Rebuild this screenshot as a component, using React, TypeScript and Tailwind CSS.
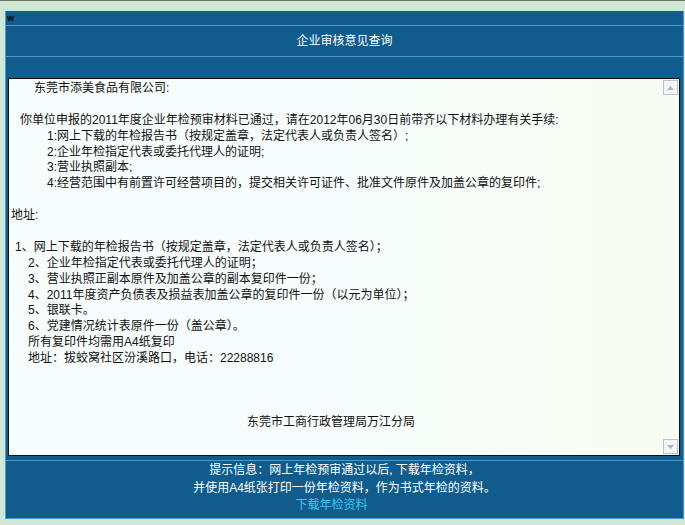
const font = { fontFamily: '"Liberation Sans", "Noto Sans CJK SC", sans-serif' };

type Line = { text: string; pad: number };

const lines: Line[] = [
  { text: '东莞市添美食品有限公司:', pad: 24 },
  { text: '', pad: 0 },
  { text: '你单位申报的2011年度企业年检预审材料已通过，请在2012年06月30日前带齐以下材料办理有关手续:', pad: 10 },
  { text: '1:网上下载的年检报告书（按规定盖章，法定代表人或负责人签名）;', pad: 37 },
  { text: '2:企业年检指定代表或委托代理人的证明;', pad: 37 },
  { text: '3:营业执照副本;', pad: 37 },
  { text: '4:经营范围中有前置许可经营项目的，提交相关许可证件、批准文件原件及加盖公章的复印件;', pad: 37 },
  { text: '', pad: 0 },
  { text: '地址:', pad: 1 },
  { text: '', pad: 0 },
  { text: '1、网上下载的年检报告书（按规定盖章，法定代表人或负责人签名）；', pad: 5 },
  { text: '2、企业年检指定代表或委托代理人的证明；', pad: 18 },
  { text: '3、营业执照正副本原件及加盖公章的副本复印件一份；', pad: 18 },
  { text: '4、2011年度资产负债表及损益表加盖公章的复印件一份（以元为单位）；', pad: 18 },
  { text: '5、银联卡。', pad: 18 },
  { text: '6、党建情况统计表原件一份（盖公章）。', pad: 18 },
  { text: '所有复印件均需用A4纸复印', pad: 18 },
  { text: '地址：拔蛟窝社区汾溪路口，电话：22288816', pad: 18 },
  { text: '', pad: 0 },
  { text: '', pad: 0 },
  { text: '', pad: 0 },
  { text: '东莞市工商行政管理局万江分局', pad: 237 },
];

function ScrollButton({ down }: { down?: boolean }) {
  return (
    <div className="w-[15px] h-[15px] border border-[#b9c4d0] bg-[#f4f6f6] flex items-center justify-center">
      <svg width="7" height="4" viewBox="0 0 7 4">
        <path d={down ? 'M0 0h7L3.5 4z' : 'M0 4h7L3.5 0z'} fill="#a9b3bd" />
      </svg>
    </div>
  );
}

export default function App() {
  return (
    <div className="w-[685px] h-[525px] bg-[#cfe7d3] border-t border-[#6d786d] pt-[10px] pl-[5px] pr-[1px] text-[12px]" style={font}>
      <div className="bg-[#4b9bd3] pl-px pr-px pb-px flex flex-col gap-px">
        {/* barre du haut */}
        <div className="h-[14px] bg-[#105c8c] flex items-center pl-px">
          <span className="text-[9px] font-bold text-black leading-none">w</span>
        </div>

        {/* titre */}
        <div className="h-[30px] bg-[#105c8c] flex items-center justify-center text-white">
          企业审核意见查询
        </div>

        {/* contenu */}
        <div className="h-[403px] bg-[#105c8c] pt-[21px] pl-[2px] pr-[3px]">
          <div className="h-[378px] border border-[#111] bg-gradient-to-r from-[#f7fdfd] via-[#f7fdfc] to-[#f7fbf1] flex">
            <div className="flex-1 pt-[2px] pl-[1px] text-[#111] leading-[15.9px] overflow-hidden">
              {lines.map((l, i) => (
                <div key={i} className="h-[15.9px] whitespace-nowrap" style={{ paddingLeft: l.pad }}>
                  {l.text}
                </div>
              ))}
            </div>
            <div className="flex flex-col justify-between py-[1px] pr-[1px]">
              <ScrollButton />
              <ScrollButton down />
            </div>
          </div>
        </div>

        {/* pied */}
        <div className="h-[57px] bg-[#105c8c] pt-[1px] flex flex-col items-center text-white leading-[17.5px]">
          <div>提示信息：网上年检预审通过以后, 下载年检资料，</div>
          <div>并使用A4纸张打印一份年检资料，作为书式年检的资料。</div>
          <div className="text-[#3cc4f2] pr-[26px]">下载年检资料</div>
        </div>
      </div>
    </div>
  );
}
